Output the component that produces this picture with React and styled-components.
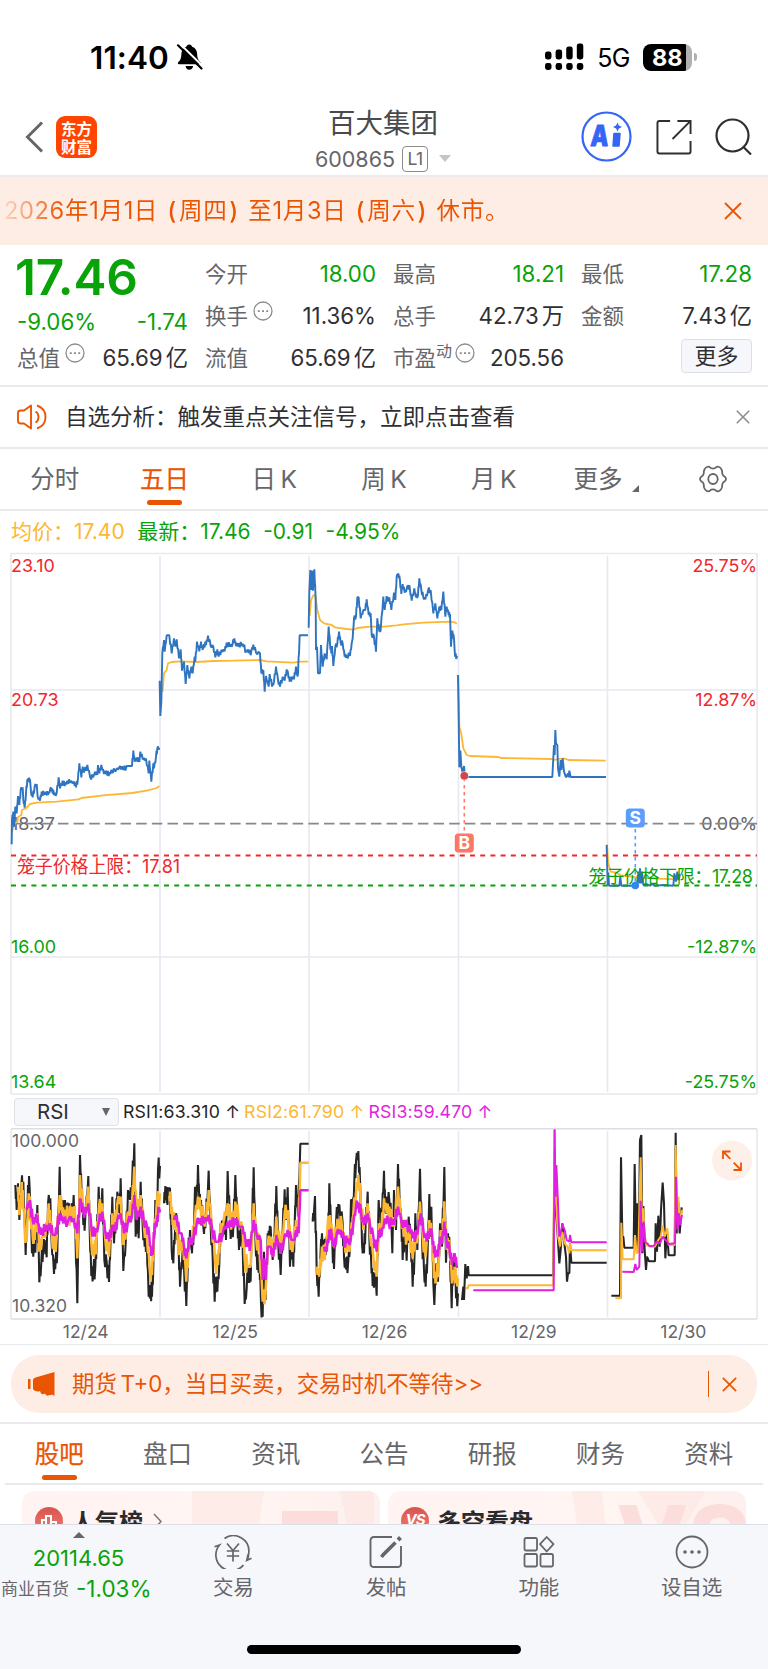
import React from "react";
import styled, { createGlobalStyle, css } from "styled-components";

const GlobalStyle = createGlobalStyle`
  * { box-sizing: border-box; }
  html, body { margin: 0; padding: 0; background: #fff; }
  body {
    width: 768px;
    font-family: Inter, "Noto Sans CJK SC", sans-serif;
    color: #2f2f33;
  }
`;

const c = {
  orange: "#ea5504",
  green: "#09a309",
  red: "#f0282d",
  gray: "#66666a",
  amber: "#fdb732",
  blue: "#2f74c0",
  magenta: "#e11fe0",
  line: "#e9e9ec",
  grid: "#e6e9f1",
};

/* ---------- page frame ---------- */

const Page = styled.main`
  width: 768px;
  height: 1669px;
  display: flex;
  flex-direction: column;
  overflow: hidden;
  background: #fff;
`;

const StatusBar = styled.header`
  height: 98px;
  flex: none;
  padding: 32px 71px 0 90px;
  display: flex;
  align-items: flex-start;
  justify-content: space-between;
`;

const StatusGroup = styled.div`
  display: flex;
  align-items: center;
  height: 50px;
  gap: ${(p) => p.$gap}px;
`;

const Clock = styled.span`
  font-size: 31.5px;
  font-weight: 600;
  letter-spacing: 0.1px;
  color: #000;
`;

const Network = styled.span`
  font-size: 25px;
  font-weight: 400;
  letter-spacing: -0.5px;
  color: #000;
  padding-top: 2px;
`;

const BatteryBody = styled.div`
  width: 49px;
  height: 27px;
  border-radius: 8px;
  background: linear-gradient(90deg, #000 43px, #b0b0b0 43px);
  color: #fff;
  font-size: 23.5px;
  font-weight: 700;
  line-height: 27px;
  padding-left: 9px;
`;

const BatteryCap = styled.i`
  width: 3px;
  height: 8px;
  margin-left: 2px;
  border-radius: 0 4px 4px 0;
  background: #b0b0b0;
`;

const Battery = styled.div`
  display: flex;
  align-items: center;
`;

const NavBar = styled.nav`
  height: 79px;
  flex: none;
  padding: 0 16px 0 24px;
  border-bottom: 2px solid #ebebee;
  display: grid;
  grid-template-columns: 180px 1fr 190px;
  align-items: start;
`;

const NavSide = styled.div`
  height: 77px;
  display: flex;
  align-items: center;
  justify-content: ${(p) => (p.$end ? "flex-end" : "flex-start")};
  gap: ${(p) => p.$gap}px;
`;

const Logo = styled.div`
  width: 41px;
  height: 42px;
  border-radius: 9px;
  background: #ff4500;
  color: #fff;
  font-family: "Noto Sans CJK SC", sans-serif;
  font-size: 15.5px;
  font-weight: 700;
  line-height: 18px;
  text-align: center;
  padding-top: 3px;
`;

const StockName = styled.h1`
  margin: 9px 0 0;
  font-size: 27.5px;
  font-weight: 400;
  line-height: 32px;
  color: #4a4a4d;
  text-align: center;
`;

const StockCode = styled.div`
  display: flex;
  align-items: center;
  justify-content: center;
  height: 39px;
  font-size: 21.5px;
  color: #66666a;
`;

const LevelTag = styled.span`
  width: 26px;
  height: 26px;
  margin: 0 11px 0 7px;
  border: 1.5px solid #8b8b8e;
  border-radius: 4px;
  font-size: 17.5px;
  line-height: 23px;
  text-align: center;
  letter-spacing: -0.5px;
`;

const Caret = styled.i`
  border: 6.5px solid transparent;
  border-top: 7px solid #c5c5c8;
  border-bottom: 0;
`;

const Banner = styled.section`
  height: 68px;
  flex: none;
  padding: 0 26px 0 4px;
  background: #feede5;
  color: ${c.orange};
  display: flex;
  align-items: center;
  justify-content: space-between;
`;

const BannerText = styled.span`
  font-size: 23.6px;
  line-height: 34px;
  padding-bottom: 1px;
  letter-spacing: 0.65px;
  white-space: nowrap;
  background: linear-gradient(90deg, rgba(234, 85, 4, 0.15), ${c.orange} 60px);
  -webkit-background-clip: text;
  background-clip: text;
  color: transparent;
`;

const HalfParen = styled.span`
  display: inline-block;
  width: 13.5px;
  text-align: center;
  color: ${c.orange};
`;

/* ---------- quote ---------- */

const Quote = styled.section`
  height: 142px;
  flex: none;
  padding: 8px 16px 0 17px;
  border-bottom: 2px solid ${c.line};
  display: grid;
  grid-template-columns: repeat(4, 171px);
  grid-auto-rows: 42px;
  column-gap: 17px;
`;

const PriceBlock = styled.div`
  grid-row: span 2;
  color: ${c.green};
`;

const Price = styled.div`
  height: 46px;
  margin-left: -2px;
  font-size: 49.5px;
  font-weight: 600;
  line-height: 49px;
  letter-spacing: -0.2px;
`;

const Change = styled.div`
  display: flex;
  justify-content: space-between;
  font-size: 22.3px;
  line-height: 46px;
`;

const Cell = styled.div`
  display: flex;
  align-items: center;
  justify-content: space-between;
  white-space: nowrap;
`;

const Label = styled.span`
  display: flex;
  align-items: center;
  font-size: 21.5px;
  line-height: 30px;
  color: ${c.gray};
`;

const Value = styled.span`
  font-size: 22.3px;
  line-height: 30px;
  color: ${(p) => (p.$down ? c.green : "#2f2f33")};
`;

const Unit = styled.span`
  margin-left: 3px;
`;

const Sup = styled.small`
  font-size: 16px;
  line-height: 16px;
  padding-bottom: 14px;
`;

const HintWrap = styled.span`
  display: flex;
  padding-bottom: 10px;
  margin-left: ${(p) => p.$gap}px;
`;

const MoreButton = styled.button`
  width: 71px;
  height: 34px;
  margin: 0 0 5px auto;
  padding: 0;
  border: 1.5px solid #dcdfe6;
  border-radius: 4px;
  background: #f6f7fa;
  font: 22px/30px Inter, "Noto Sans CJK SC", sans-serif;
  color: #2f2f33;
`;

const Notice = styled.section`
  height: 62px;
  flex: none;
  padding: 0 18px 0 17px;
  border-bottom: 2px solid ${c.line};
  display: flex;
  align-items: center;
`;

const NoticeText = styled.span`
  flex: 1;
  margin-left: 18px;
  font-size: 22.5px;
  line-height: 30px;
  color: #2f2f33;
`;

/* ---------- tabs ---------- */

const Tabs = styled.nav`
  height: ${(p) => p.$height}px;
  flex: none;
  margin: 0 ${(p) => p.$inset || 0}px;
  border-bottom: 2px solid ${c.line};
  display: grid;
  grid-template-columns: repeat(7, 1fr);
`;

const Tab = styled.a`
  position: relative;
  display: flex;
  align-items: center;
  justify-content: center;
  font-size: 24.5px;
  line-height: 32px;
  word-spacing: -2.5px;
  color: ${c.gray};
  ${(p) =>
    p.$active &&
    css`
      color: ${c.orange};
      -webkit-text-stroke: 0.25px ${c.orange};
      &::after {
        content: "";
        position: absolute;
        bottom: ${p.$drop}px;
        left: calc(50% - 17.5px);
        width: 35px;
        height: 5px;
        border-radius: 3px;
        background: ${c.orange};
      }
    `}
`;

const Corner = styled.i`
  align-self: flex-end;
  margin: 0 -6px 17px 10px;
  border-left: 7px solid transparent;
  border-bottom: 7px solid ${c.gray};
`;

/* ---------- chart ---------- */

const Legend = styled.div`
  height: 41px;
  flex: none;
  padding: 0 11px;
  display: flex;
  align-items: baseline;
  gap: 12.5px;
  font-size: 21px;
  line-height: 42px;
  color: ${c.green};
  white-space: nowrap;
`;

const Average = styled.span`
  color: ${c.amber};
`;

const Chart = styled.svg`
  display: block;
  flex: none;
  width: 768px;
  height: ${(p) => p.$height}px;
  font-family: Inter, "Noto Sans CJK SC", sans-serif;
`;

const IndicatorBar = styled.div`
  height: 33px;
  flex: none;
  padding-left: 14px;
  display: flex;
  align-items: center;
  gap: 4px;
`;

const IndicatorSelect = styled.div`
  width: 105px;
  height: 28px;
  border: 1.5px solid #dfe1e7;
  border-radius: 4px;
  background: #f6f7fa;
  display: flex;
  align-items: center;
  justify-content: space-between;
  padding: 0 8px 0 22px;
  font-size: 20.5px;
`;

const SelectCaret = styled.i`
  border: 4.5px solid transparent;
  border-top: 8px solid ${c.gray};
  border-bottom: 0;
`;

const Reading = styled.span`
  font-size: 17.7px;
  letter-spacing: 0.17px;
  white-space: nowrap;
  color: ${(p) => p.$color};
`;

const Dates = styled.div`
  height: 25px;
  flex: none;
  padding: 0 10px 0 11px;
  border-bottom: 1.5px solid ${c.line};
  display: grid;
  grid-template-columns: repeat(5, 1fr);
  font-size: 17.5px;
  line-height: 24px;
  text-align: center;
  color: ${c.gray};
`;

/* ---------- promo, cards, bottom bar ---------- */

const PromoWrap = styled.section`
  height: 79px;
  flex: none;
  padding: 10px 11px 0;
  border-bottom: 2px solid ${c.line};
`;

const Promo = styled.div`
  height: 58px;
  padding: 0 20px 0 17px;
  border-radius: 28px;
  background: #feede5;
  color: ${c.orange};
  display: flex;
  align-items: center;
`;

const PromoText = styled.span`
  flex: 1;
  margin-left: 16px;
  font-size: 22.4px;
  line-height: 30px;
  word-spacing: -2.5px;
  white-space: nowrap;
`;

const Divider = styled.i`
  width: 1.5px;
  height: 26px;
  margin-right: 13px;
  background: ${c.orange};
`;

const Cards = styled.section`
  height: 39px;
  flex: none;
  overflow: hidden;
  padding: 6px 22px 0;
  display: grid;
  grid-template-columns: 1fr 1fr;
  gap: 8px;
`;

const Card = styled.article`
  position: relative;
  height: 90px;
  overflow: hidden;
  border-radius: 12px 12px 0 0;
  padding: 16px 13px 0;
  background: linear-gradient(90deg, #fff4f1, #fff5f1 60%, #fdf0ee);
  display: flex;
  align-items: flex-start;
  gap: 8px;
  font-size: 24px;
  font-weight: 600;
  line-height: 32px;
  color: #2b2b2e;
`;

const CardBadge = styled.span`
  width: 28px;
  height: 28px;
  border-radius: 50%;
  background: linear-gradient(#d9534c, #ef8179);
  color: #fff;
  font-size: 15px;
  font-style: italic;
  font-weight: 700;
  line-height: 25px;
  letter-spacing: -1px;
  text-align: center;
  display: flex;
  justify-content: center;
`;

const CardArt = styled.svg`
  position: absolute;
  right: 0;
  top: 0;
`;

const CardTitle = styled.span`
  position: relative;
  display: flex;
  gap: 10px;
`;

const BottomBar = styled.footer`
  height: 145px;
  flex: none;
  border-top: 1.5px solid #dcdfe6;
  background: #f6f7fa;
  display: grid;
  grid-template-columns: 157px repeat(4, 1fr);
  grid-template-rows: 84px 1fr;
`;

const Action = styled.a`
  display: flex;
  flex-direction: column;
  align-items: center;
  padding-top: 10px;
  font-size: 20.5px;
  line-height: 28px;
  color: ${c.gray};
  gap: 5px;
`;

const Sector = styled.div`
  display: flex;
  flex-direction: column;
  align-items: center;
  padding-top: 7px;
  color: ${c.green};
  font-size: 22px;
`;

const UpCaret = styled.i`
  border: 6px solid transparent;
  border-bottom: 6px solid ${c.gray};
  border-top: 0;
`;

const SectorIndex = styled.span`
  line-height: 28px;
  margin: 6px 0 3px;
`;

const SectorRow = styled.span`
  align-self: flex-start;
  padding-left: 1px;
  display: flex;
  align-items: center;
  gap: 7px;
  line-height: 28px;
  font-size: 22.5px;
  white-space: nowrap;
`;

const SectorName = styled.small`
  font-size: 17px;
  color: ${c.gray};
`;

const HomeIndicator = styled.i`
  grid-column: 1 / -1;
  width: 274px;
  height: 9px;
  margin: 36px 0 0 247px;
  border-radius: 5px;
  background: #000;
`;

/* ---------- icons ---------- */

const MutedBell = () => (
  <svg width="27" height="28" viewBox="0 0 27 28">
    <path d="M13.2 1.5c1.7 0 2.6 1 2.9 2.3 3.3 1 4.9 3.8 5 7 .2 4 .7 6 3.3 8.4.9.9.5 2-.7 2H3c-1.2 0-1.6-1.1-.8-2C4.9 16.800 5.200 14.800 5.400 10.800c.1-3.200 1.700-6 5-7 .2-1.300 1.100-2.300 2.800-2.300z" />
    <path d="M9.500 23h7.600c-.3 2.300-1.700 3.800-3.800 3.800S9.800 25.300 9.500 23z" />
    <path d="M3.700 0.600 27 23.500" stroke="#fff" strokeWidth="2" />
    <path d="M2 2.300 25.500 25.500" stroke="#000" strokeWidth="2.200" strokeLinecap="round" />
  </svg>
);

const Signal = () => (
  <svg width="40" height="28" viewBox="0 0 40 28">
    {[8, 6, 3, 0].map((top, i) => (
      <g key={top}>
        <rect x={1 + i * 10.600} y={top + 0.500} width="6.500" height={16 - top} rx="2.400" />
        <rect x={1 + i * 10.600} y="20" width="6.500" height="7" rx="2.400" />
      </g>
    ))}
  </svg>
);

const Back = () => (
  <svg width="20" height="32" viewBox="0 0 20 32" fill="none" stroke="#66666a" strokeWidth="3">
    <path d="M18 1.500 3.500 16 18 30.500" />
  </svg>
);

const AiBadge = () => (
  <svg width="51" height="51" viewBox="0 0 51 51">
    <circle cx="25.500" cy="25.500" r="24" fill="none" stroke="#3565f6" strokeWidth="2.200" />
    <text x="9.500" y="35" fontFamily="Inter" fontWeight="900" fontSize="29" fill="#3565f6" stroke="#3565f6" strokeWidth=".8" strokeLinejoin="round" transform="skewX(-4) translate(2 0)" textLength="18" lengthAdjust="spacingAndGlyphs">A</text>
    <path d="M33 22.500h6l-1 12.500h-6z" fill="#3565f6" stroke="#3565f6" strokeWidth="1.500" strokeLinejoin="round" />
    <path d="M36.500 11.500l1.400 3 3.100 1.500-3.100 1.500-1.400 3-1.400-3-3.100-1.500 3.100-1.500z" fill="#3565f6" />
  </svg>
);

const Share = () => (
  <svg width="36" height="36" viewBox="0 0 37 37" fill="none" stroke="#2f2f33" strokeWidth="2">
    <path d="M14.500 2H3.500Q1.500 2 1.500 4V33.500Q1.500 35.500 3.500 35.500H33.500Q35.500 35.500 35.500 33.500V22.500" />
    <path d="M22 2H35.500V15.500M35 2.500 17 20.500" />
  </svg>
);

const Search = () => (
  <svg width="37" height="37" viewBox="0 0 37 37" fill="none" stroke="#2f2f33" strokeWidth="2.200">
    <circle cx="17.500" cy="17.500" r="16" />
    <path d="M28 28.500 36 36.500" />
  </svg>
);

const Close = ({ size, color, width = 1.800 }) => (
  <svg width={size} height={size} viewBox="0 0 18 18" fill="none" stroke={color} strokeWidth={width}>
    <path d="M1 1 17 17M17 1 1 17" />
  </svg>
);

const Hint = ({ gap = 5 }) => (
  <HintWrap $gap={gap}>
    <svg width="20" height="20" viewBox="0 0 20 20">
      <circle cx="10" cy="10" r="9" fill="none" stroke="#8c8c8f" strokeWidth="1.300" />
      <path d="M4.800 9.300h2v1.800h-2zM9 9.300h2v1.800H9zM13.200 9.300h2v1.800h-2z" fill="#8c8c8f" />
    </svg>
  </HintWrap>
);

const Speaker = () => (
  <svg width="30" height="26" viewBox="0 0 30 26" fill="none" stroke={c.orange} strokeWidth="1.900" strokeLinejoin="round">
    <path d="M14 1.500V24.500L7 19.500H3.500Q1 19.500 1 17V9Q1 6.500 3.500 6.500H7z" />
    <path d="M18.500 7.500q3 1.500 3 5.500t-3 5.500M20 1.500q8.500 3 8.500 11.500T20 24.500" />
  </svg>
);

const Gear = () => (
  <svg width="30" height="28" viewBox="0 0 30 28" fill="none" stroke={c.gray} strokeWidth="1.800">
    <path d="M10.500 1.700c1.600 0 1.400 1.900 4.500 1.900s2.900-1.900 4.500-1.900c2 0 4 2.200 4.500 4 .4 1.700-.3 2.700 1 4.500 1.300 1.600 3 1.500 3 3.800s-1.700 2.200-3 3.800c-1.300 1.800-.6 2.800-1 4.500-.5 1.800-2.500 4-4.500 4-1.600 0-1.400-1.900-4.500-1.900s-2.900 1.900-4.500 1.900c-2 0-4-2.200-4.500-4-.4-1.700.3-2.700-1-4.500-1.300-1.600-3-1.500-3-3.800s1.700-2.200 3-3.800c1.300-1.800.6-2.800 1-4.500.5-1.800 2.500-4 4.500-4z" />
    <ellipse cx="15" cy="14" rx="4.700" ry="5" />
  </svg>
);

const Megaphone = () => (
  <svg width="28" height="24" viewBox="0 0 28 24" fill={c.orange}>
    <path d="M0 7h2.500v10H0zM5 8q0-2 2.500-2.500L26.500 0v24L24 22.500q-1 1-3 .5-1 1.300-3 0l-1-1.500q-2 1.300-4 0l-1-2.500q-2 1-4 0Q5 18.500 5 16z" />
  </svg>
);

const Trade = () => (
  <svg width="38" height="34" viewBox="0 0 38 34" fill="none" stroke={c.gray} strokeWidth="1.700">
    <path d="M10.500 3.500A15.500 15.500 0 0 1 34.800 17.500Q34.800 21.500 33 25.200L37.500 23.200M29.500 30A15.500 15.500 0 0 1 5.500 10L.5 11.800" />
    <path d="M33 25.200 34 19.500" />
    <path d="M13 8.500 19 15.500 25 8.500M19 15.500V26.500M12.800 16h12.400M12.800 21h12.400" />
  </svg>
);

const Compose = () => (
  <svg width="34" height="34" viewBox="0 0 34 34" fill="none" stroke={c.gray} strokeWidth="1.900">
    <path d="M23 2H5Q1.500 2 1.500 5.500V28.500Q1.500 32 5 32H28.500Q32 32 32 28.500V11" />
    <path d="M26.500 7.500 14 20 12.500 22" strokeWidth="3.600" />
    <path d="M29 5 31.500 2.500" strokeWidth="4" />
  </svg>
);

const Apps = () => (
  <svg width="34" height="34" viewBox="0 0 34 34" fill="none" stroke={c.gray} strokeWidth="1.800" strokeLinejoin="round">
    <rect x="2.500" y="3" width="12.500" height="12.500" rx="1.500" />
    <rect x="2.500" y="19" width="12.500" height="12.500" rx="1.500" />
    <rect x="18.500" y="19" width="12.500" height="12.500" rx="1.500" />
    <path d="M24.700 2 31.500 9.200 24.700 16.500 18 9.200z" />
  </svg>
);

const Ellipsis = () => (
  <svg width="34" height="34" viewBox="0 0 34 34">
    <circle cx="17" cy="17" r="15.500" fill="none" stroke={c.gray} strokeWidth="1.800" />
    {[10, 17, 24].map((x) => (
      <circle key={x} cx={x} cy="17" r="1.800" fill={c.gray} />
    ))}
  </svg>
);

/* ---------- series (three units to a pixel) ---------- */

const priceDays = [
  {
    x: 0, y: 510,
    blue: "35,1003 36,930 40,905 42,950 46,890 50,910 54,858 58,885 62,840 68,832 70,870 74,893 78,850 82,808 86,812 90,808 93,845 98,862 104,830 110,822 113,860 120,872 125,845 132,855 138,845 144,855 150,840 156,835 162,855 170,850 176,802 180,835 188,812 194,828 202,812 210,818 222,815 228,832 234,805 238,760 244,802 248,770 252,788 262,765 270,800 280,802 285,785 292,795 294,765 298,790 304,765 312,792 320,782 326,798 334,780 346,785 360,768 370,780 380,768 396,768 400,722 404,755 412,742 418,756 421,725 428,748 438,746 446,790 448,752 454,815 460,760 462,775 468,740 472,715 478,713",
    amber: "36,965 44,940 52,935 54,922 64,915 66,900 78,895 90,882 110,878 170,875 236,868 244,864 310,856 396,849 440,842 470,834 478,828",
  },
  {
    x: 0, y: 510,
    blue: "479,512 481,618 484,575 487,430 492,390 494,425 500,376 508,376 515,430 522,385 526,410 530,388 537,445 542,418 546,482 552,455 557,522 562,465 568,505 574,470 578,490 584,440 586,455 591,395 598,424 603,395 608,420 612,402 618,405 624,377 632,408 640,410 646,442 652,418 656,440 664,420 674,424 680,398 690,410 698,402 703,385 708,408 716,400 726,408 733,404 736,428 744,418 748,430 754,425 760,404 768,428 780,430 784,490 790,480 794,545 798,498 806,530 809,492 816,530 822,515 828,470 834,510 840,530 848,500 854,512 860,478 864,490 869,515 876,500 882,508 888,470 890,495 894,492 899,376 924,376",
    amber: "488,545 492,490 500,480 504,460 515,456 540,454 590,456 640,453 700,452 780,450 800,454 880,458 900,455 924,455",
  },
  {
    x: 300, y: 510,
    blue: "26,353 28,245 31,180 34,240 37,182 39,242 43,178 47,270 48,420 51,410 54,490 60,490 63,405 68,470 74,430 80,448 86,350 90,400 94,430 96,408 100,468 106,410 112,402 117,365 122,398 128,400 134,440 140,435 150,438 155,400 158,385 162,325 168,320 172,262 176,262 182,325 190,300 196,300 200,268 206,315 212,310 215,375 222,380 228,425 232,325 238,365 242,360 250,260 254,300 260,258 264,275 268,262 274,300 282,248 286,270 290,200 295,190 300,212 304,252 308,222 314,248 320,238 325,225 330,240 335,272 343,235 348,262 354,255 358,205 364,240 370,262 376,268 384,242 392,240 400,310 406,280 412,325 418,290 424,300 430,245 436,320 440,290 446,315 450,312 453,410 457,362 462,385 465,440 471,437",
    amber: "29,318 33,270 40,256 46,256 52,300 60,330 72,340 95,345 105,352 140,357 162,359 172,354 210,350 250,350 290,346 310,343 370,338 450,335 464,337 471,341",
  },
  {
    x: 300, y: 510,
    blue: "474,495 476,620 478,772 481,722 484,770 488,790 492,768 495,801 757,801 762,705 764,735 766,660 768,700 772,705 774,775 778,800 782,750 784,780 788,745 792,785 798,802 804,790 806,802 808,782 812,801 918,801",
    amber: "475,500 478,650 484,672 490,715 500,735 510,738 595,741 602,744 755,747 764,750 780,746 795,746 805,750 917,752",
  },
  {
    x: 450, y: 650,
    blue: "470,585 473,707 475,668 477,707 508,707 511,680 514,707 560,707 566,665 568,700 570,655 573,700 576,665 580,705 590,702 600,707 606,702 615,707 640,705 670,707 673,670 678,695 682,665 686,690 690,672",
    amber: "471,583 475,640 482,665 500,668 512,676 560,682 620,686 690,688",
  },
];

const rsiDays = [
  {
    x: 0,
    fast: "46,345 50,420 54,340 58,450 64,350 70,335 77,555 84,345 89,355 96,550 102,520 106,548 112,405 118,637 124,575 130,530 134,510 140,562 144,400 151,385 154,500 162,612 168,550 172,545 179,290 182,440 187,390 192,430 195,390 200,440 208,400 214,450 221,375 226,480 232,700 240,255 245,370 250,465 256,440 265,318 269,480 274,618 280,605 286,590 290,520 296,350 300,440 307,355 313,570 320,575 327,636 332,500 337,380 342,520 348,440 352,365 358,430 362,325 370,603 378,500 384,360 390,390 396,350 403,220 407,500 412,440 416,505 422,335 428,470 434,530 440,510 446,680 452,650 456,680 460,590 466,390 470,450 474,300 480,288",
    mid: "54,350 58,435 64,370 68,360 74,480 80,515 86,370 92,420 98,500 104,510 112,430 118,545 126,500 136,500 144,430 150,420 156,500 162,540 170,500 179,375 186,430 195,420 205,435 214,440 221,410 226,450 232,565 240,315 250,430 258,430 265,350 274,520 282,560 290,500 296,420 307,400 315,500 327,560 337,430 345,470 352,400 362,380 370,525 380,450 390,430 396,400 403,290 410,440 422,375 432,470 440,490 450,610 456,615 462,500 470,400 480,370",
    slow: "80,420 86,395 92,410 98,450 106,455 112,435 118,490 126,475 136,485 150,460 158,495 166,495 172,470 179,430 190,460 205,450 221,445 232,490 240,385 250,425 258,430 265,400 274,470 284,500 296,460 307,425 315,480 327,515 337,465 345,485 352,450 362,430 372,490 384,455 396,440 403,375 410,450 422,410 432,460 440,465 448,500 454,558 460,530 464,460 470,470 475,420 480,418",
  },
  {
    x: 0,
    fast: "492,400 496,348 500,400 504,355 510,355 515,540 520,580 526,450 530,470 536,530 540,650 548,540 552,590 559,708 564,560 570,480 576,550 582,470 585,350 589,420 594,285 598,400 603,390 610,470 616,475 626,302 632,470 638,560 644,695 648,620 652,665 658,580 662,460 668,500 672,440 678,510 683,303 690,460 696,500 700,470 706,315 712,450 717,540 722,470 728,530 734,702 740,655 746,590 752,635 757,430 761,292 766,500 772,600 778,560 783,700 788,740 792,545 797,690 803,490 808,510 812,470 818,570 824,480 829,348 834,500 842,615 848,480 854,358 858,450 863,352 870,590 876,520 880,590 884,470 888,345 894,440 901,221 926,221",
    mid: "508,378 512,380 518,465 526,440 534,520 542,545 548,500 559,635 566,520 576,520 585,440 594,380 602,420 612,450 618,455 626,360 634,450 646,580 654,585 660,500 670,460 683,400 690,440 700,465 706,395 716,450 728,480 734,570 742,590 752,590 757,470 761,400 768,500 778,530 788,695 797,665 803,530 812,500 820,560 829,440 842,550 854,430 863,420 872,540 880,520 888,450 895,480 901,278 926,278",
    slow: "522,450 530,435 538,490 545,490 552,530 559,565 566,520 580,505 590,460 600,445 612,460 626,435 636,475 646,515 656,515 668,490 683,455 694,470 706,445 716,470 728,470 736,510 744,530 752,520 761,450 770,495 782,510 788,630 793,565 797,630 803,530 812,530 820,560 829,495 842,550 852,510 863,480 874,510 884,510 888,480 896,490 901,361 926,361",
  },
  {
    x: 300,
    fast: "38,455 42,425 45,378 50,600 56,680 62,540 66,490 72,560 80,500 84,520 88,340 93,470 97,520 102,597 108,460 115,402 120,430 128,460 132,560 138,598 145,570 150,530 153,388 158,440 163,330 168,275 175,243 181,360 186,520 192,550 197,460 203,365 208,500 213,560 218,648 224,610 230,677 235,430 236,390 242,460 246,430 252,302 256,430 262,380 268,390 274,450 277,550 282,360 288,480 294,282 299,400 304,450 308,570 314,480 320,572 326,440 332,500 338,650 344,540 346,430 352,540 360,296 366,500 372,600 377,650 383,540 388,372 392,500 394,410 400,640 403,705 409,580 414,635 420,460 426,530 433,291 438,578 444,490 450,560 455,715 460,560 464,570 468,685 474,670",
    mid: "50,590 58,620 66,530 74,570 82,480 90,435 97,500 103,520 110,470 117,455 126,470 134,520 142,540 152,500 160,430 168,370 175,315 182,390 190,480 203,400 210,490 220,560 230,620 236,460 244,490 252,385 260,430 268,410 277,470 286,440 294,350 302,430 312,500 322,490 330,500 338,565 346,510 354,490 360,395 368,500 377,560 388,450 396,500 402,625 410,620 416,580 422,480 428,520 433,394 440,540 448,510 456,640 464,590 468,640 474,625",
    slow: "72,530 80,545 88,480 96,505 103,535 110,490 122,480 132,510 142,520 152,510 160,460 168,410 175,397 184,435 192,465 203,430 210,465 220,500 230,545 236,480 244,500 254,445 266,455 276,465 286,445 294,410 304,455 316,470 328,465 338,505 348,495 354,480 362,430 370,480 380,515 390,475 396,490 402,550 408,540 414,560 420,500 426,520 433,455 440,520 448,530 456,585 464,550 470,590 474,590",
  },
  {
    x: 530,
    plain: true,
    fast: "-204,690 -200,650 -198,690 -194,582 -190,625 -186,588 -184,616 70,616 74,240 78,430 82,480 88,580 92,540 97,460 103,520 108,560 111,635 114,610 118,610 120,520 124,578 230,578",
    mid: "-192,655 -187,655 -184,646 70,646 73,180 76,350 84,500 90,530 97,485 104,520 112,530 118,550 120,520 124,541 230,541",
    slow: "-170,661 71,661 74,178 76,380 79,285 84,400 88,500 92,490 97,462 104,480 110,510 118,515 120,495 124,517 230,517",
  },
  {
    x: 530,
    plain: true,
    fast: "244,677 270,677 273,262 277,500 280,500 283,533 311,533 314,282 318,540 321,400 326,540 330,210 334,195 337,550 340,408 344,540 348,600 351,560 357,574 375,574 377,460 381,545 385,437 389,530 393,420 398,338 402,400 406,565 411,480 416,556 434,556 437,188 440,490 445,400 449,490 455,412",
    mid: "256,685 273,685 274,458 278,568 311,568 315,495 320,550 325,545 332,262 336,460 340,415 344,500 350,525 360,530 375,530 385,510 392,500 398,466 404,500 412,475 416,525 434,525 437,225 441,440 445,380 450,460 456,420",
    slow: "277,605 311,606 316,582 320,600 328,590 332,392 336,545 341,455 346,518 352,520 358,528 372,527 380,515 390,520 398,500 406,510 412,515 416,522 435,520 438,320 443,480 447,430 450,465 456,435",
  },
];

/* Adds minute-to-minute flicker between the recorded turning points. */
const flicker = (text, amp) => {
  const pts = text.split(" ").map((p) => p.split(",").map(Number));
  const out = [];
  pts.forEach(([x, y], i) => {
    out.push(`${x},${y}`);
    const next = pts[i + 1];
    if (!next || !amp) return;
    const dx = next[0] - x;
    const dy = next[1] - y;
    if (dx < 4 || dx > 16 || dy === 0) return;
    const a = amp * (0.6 + ((i * 7) % 5) / 6);
    const s = dy > 0 ? 1 : -1;
    out.push(`${x + dx * 0.35},${y + dy * 0.35 + a * s}`);
    out.push(`${x + dx * 0.62},${y + dy * 0.62 - a * s}`);
  });
  return out.join(" ");
};

const Series = ({ points, color, amp = 0, width = 5.800 }) => (
  <polyline points={flicker(points, amp)} fill="none" stroke={color} strokeWidth={width} strokeLinejoin="bevel" />
);

const columns = [160, 309, 458.500, 607.500];

const AxisLabel = ({ y, left, right, color }) => (
  <g fill={color} fontSize="17.900">
    <text x="11" y={y}>{left}</text>
    <text x="757" y={y} textAnchor="end">{right}</text>
  </g>
);

const TradeMark = ({ x, y, letter, color }) => (
  <g>
    <rect x={x - 9.500} y={y - 9.500} width="19" height="19" rx="3.500" fill={color} />
    <text x={x} y={y + 6.300} fill="#fff" fontSize="17.500" fontWeight="700" textAnchor="middle">{letter}</text>
  </g>
);

const PriceChart = () => (
  <Chart $height={543} viewBox="0 552 768 543">
    <g stroke={c.grid} strokeWidth="1.600">
      <path d="M11 553.500H757M11 690H757M11 957H757M11 1094H757M11 553V1094M757 553V1094" />
      {columns.map((x) => (
        <path key={x} d={`M${x} 556V1092`} />
      ))}
    </g>
    <AxisLabel y={571.700} left="23.10" right="25.75%" color={c.red} />
    <AxisLabel y={706} left="20.73" right="12.87%" color={c.red} />
    <AxisLabel y={829.500} left="18.37" right="0.00%" color={c.gray} />
    <AxisLabel y={952.500} left="16.00" right="-12.87%" color={c.green} />
    <AxisLabel y={1087.600} left="13.64" right="-25.75%" color={c.green} />
    <path d="M11 823.700H757" stroke="#88888b" strokeWidth="1.700" strokeDasharray="10.500 5.150" />
    {priceDays.map((d, i) => (
      <g key={i} transform={`translate(${d.x} ${d.y}) scale(.33333)`}>
        <Series points={d.amber} color={c.amber} width={5.400} />
        <Series points={d.blue} color={c.blue} amp={i < 3 ? 7 : 0} />
      </g>
    ))}
    <path d="M11 855.500H757" stroke={c.red} strokeWidth="1.800" strokeDasharray="5 5.200" />
    <path d="M11 885.500H757" stroke={c.green} strokeWidth="1.800" strokeDasharray="5 5.200" />
    <g fontSize="18">
      <text x="17" y="873" fill={c.red} textLength="163">笼子价格上限：17.81</text>
      <text x="588.500" y="882.600" fill={c.green} textLength="164.500">笼子价格下限：17.28</text>
    </g>
    <path d="M464.300 778V833" stroke="#ff7a68" strokeWidth="1.600" strokeDasharray="3.500 3.500" />
    <circle cx="464.300" cy="775.800" r="4.600" fill="#fff" opacity=".7" />
    <circle cx="464.300" cy="775.800" r="3.900" fill="#d0484e" />
    <TradeMark x={464.300} y={843} letter="B" color="#fb7767" />
    <path d="M635.300 829V884" stroke="#5b9dfd" strokeWidth="1.600" strokeDasharray="3.500 3.500" />
    <circle cx="635.300" cy="885.500" r="3.800" fill="#3484ee" />
    <TradeMark x={635.300} y={818} letter="S" color="#5b9dfd" />
  </Chart>
);

const RsiChart = () => (
  <Chart $height={192} viewBox="0 1128 768 192">
    <g stroke={c.grid} strokeWidth="1.600">
      <path d="M11 1129V1319M757 1129V1319" />
      <path d="M11 1128.800H757M11 1319H757" stroke="#dcdee5" />
      {columns.map((x) => (
        <path key={x} d={`M${x} 1131V1317`} />
      ))}
    </g>
    <g fill={c.gray} fontSize="17.500">
      <text x="12" y="1147.300" textLength="67">100.000</text>
      <text x="12" y="1311.500" textLength="55">10.320</text>
    </g>
    {rsiDays.map((d, i) => (
      <g key={i} transform={`translate(${d.x} 1070) scale(.33333)`}>
        <Series points={d.fast} color="#252526" amp={d.plain ? 0 : 26} width={6.200} />
        <Series points={d.mid} color={c.amber} amp={d.plain ? 0 : 24} width={d.plain ? 6 : 7.500} />
        <Series points={d.slow} color={c.magenta} amp={d.plain ? 0 : 15} width={d.plain ? 6 : 7.500} />
      </g>
    ))}
    <circle cx="732" cy="1160.500" r="20" fill="#feede5" opacity=".85" />
    <path d="M723 1159V1151.500H730.500M723 1151.500 730.300 1158.800M741 1162.500V1170H733.500M741 1170 733.700 1162.700" fill="none" stroke={c.orange} strokeWidth="1.800" />
  </Chart>
);

/* ---------- page ---------- */

const quoteCells = [
  { label: "今开", value: "18.00", down: true },
  { label: "最高", value: "18.21", down: true },
  { label: "最低", value: "17.28", down: true },
  { label: "换手", value: "11.36%", hint: true },
  { label: "总手", value: "42.73", unit: "万" },
  { label: "金额", value: "7.43", unit: "亿" },
  { label: "总值", value: "65.69", unit: "亿", hint: true },
  { label: "流值", value: "65.69", unit: "亿" },
  { label: "市盈", sup: "动", value: "205.56", hint: true },
];

const actions = [
  [Trade, "交易"],
  [Compose, "发帖"],
  [Apps, "功能"],
  [Ellipsis, "设自选"],
];

export default function App() {
  return (
    <Page>
      <GlobalStyle />
      <StatusBar>
        <StatusGroup $gap={7}>
          <Clock>11:40</Clock>
          <MutedBell />
        </StatusGroup>
        <StatusGroup $gap={13}>
          <Signal />
          <Network>5G</Network>
          <Battery>
            <BatteryBody>88</BatteryBody>
            <BatteryCap />
          </Battery>
        </StatusGroup>
      </StatusBar>

      <NavBar>
        <NavSide $gap={12}>
          <Back />
          <Logo>东方<br />财富</Logo>
        </NavSide>
        <div>
          <StockName>百大集团</StockName>
          <StockCode>
            600865<LevelTag>L1</LevelTag><Caret />
          </StockCode>
        </div>
        <NavSide $gap={23.500} $end>
          <AiBadge />
          <Share />
          <Search />
        </NavSide>
      </NavBar>

      <Banner>
        <BannerText>
          2026年1月1日 <HalfParen>(</HalfParen>周四<HalfParen>)</HalfParen> 至1月3日 <HalfParen>(</HalfParen>周六<HalfParen>)</HalfParen> 休市。
        </BannerText>
        <Close size={18} color={c.orange} />
      </Banner>

      <Quote>
        <PriceBlock>
          <Price>17.46</Price>
          <Change><span>-9.06%</span><span>-1.74</span></Change>
        </PriceBlock>
        {quoteCells.map((q) => (
          <Cell key={q.label}>
            <Label>
              {q.label}
              {q.sup && <Sup>{q.sup}</Sup>}
              {q.hint && <Hint gap={q.sup ? 3 : 5} />}
            </Label>
            <Value $down={q.down}>{q.value}{q.unit && <Unit>{q.unit}</Unit>}</Value>
          </Cell>
        ))}
        <Cell><MoreButton>更多</MoreButton></Cell>
      </Quote>

      <Notice>
        <Speaker />
        <NoticeText>自选分析：触发重点关注信号，立即点击查看</NoticeText>
        <Close size={14} color="#8c8c8f" width={2} />
      </Notice>

      <Tabs $height={62}>
        <Tab>分时</Tab>
        <Tab $active $drop={4}>五日</Tab>
        <Tab>日 K</Tab>
        <Tab>周 K</Tab>
        <Tab>月 K</Tab>
        <Tab>更多<Corner /></Tab>
        <Tab><Gear /></Tab>
      </Tabs>

      <Legend>
        <Average>均价：17.40</Average>
        <span>最新：17.46</span>
        <span>-0.91</span>
        <span>-4.95%</span>
      </Legend>
      <PriceChart />
      <IndicatorBar>
        <IndicatorSelect>RSI<SelectCaret /></IndicatorSelect>
        <Reading $color="#252526">RSI1:63.310 ↑</Reading>
        <Reading $color={c.amber}>RSI2:61.790 ↑</Reading>
        <Reading $color={c.magenta}>RSI3:59.470 ↑</Reading>
      </IndicatorBar>
      <RsiChart />
      <Dates>
        {["12/24", "12/25", "12/26", "12/29", "12/30"].map((d) => (
          <span key={d}>{d}</span>
        ))}
      </Dates>

      <PromoWrap>
        <Promo>
          <Megaphone />
          <PromoText>期货 T+0，当日买卖，交易时机不等待&gt;&gt;</PromoText>
          <Divider />
          <Close size={15} color={c.orange} width={2} />
        </Promo>
      </PromoWrap>

      <Tabs $height={61} $inset={5}>
        {["股吧", "盘口", "资讯", "公告", "研报", "财务", "资料"].map((t, i) => (
          <Tab key={t} $active={i === 0} $drop={3}>{t}</Tab>
        ))}
      </Tabs>

      <Cards>
        <Card>
          <CardArt width="190" height="40" viewBox="0 0 190 40">
            <path d="M2 0H74L68 40H2zM150 0H184V40H158z" fill="#fde6e3" opacity=".6" />
            <path d="M92 20H148V40H92z" fill="#fbdedb" />
          </CardArt>
          <CardBadge>
            <svg width="18" height="24" viewBox="0 0 18 24" fill="none" stroke="#fff" strokeWidth="2">
              <path d="M2 24V13H6V24M6 14V9H11V24M11 15H16V24" />
            </svg>
          </CardBadge>
          <CardTitle>
            人气榜
            <svg width="9" height="30" viewBox="0 0 9 30" fill="none" stroke="#77777a" strokeWidth="1.500">
              <path d="M1 7 8 14.500 1 22" />
            </svg>
          </CardTitle>
        </Card>
        <Card>
          <CardArt width="190" height="40" viewBox="0 0 190 40">
            <path d="M16 0H46L50 40H22zM82 0H150L126 40H106z" fill="#fde6e3" opacity=".6" />
            <text x="60" y="82" fontFamily="Inter" fontSize="94" fontWeight="800" fill="#fbdedb">VS</text>
          </CardArt>
          <CardBadge>VS</CardBadge>
          <CardTitle>多空看盘</CardTitle>
        </Card>
      </Cards>

      <BottomBar>
        <Sector>
          <UpCaret />
          <SectorIndex>20114.65</SectorIndex>
          <SectorRow><SectorName>商业百货</SectorName>-1.03%</SectorRow>
        </Sector>
        {actions.map(([Icon, label]) => (
          <Action key={label}><Icon />{label}</Action>
        ))}
        <HomeIndicator />
      </BottomBar>
    </Page>
  );
}
